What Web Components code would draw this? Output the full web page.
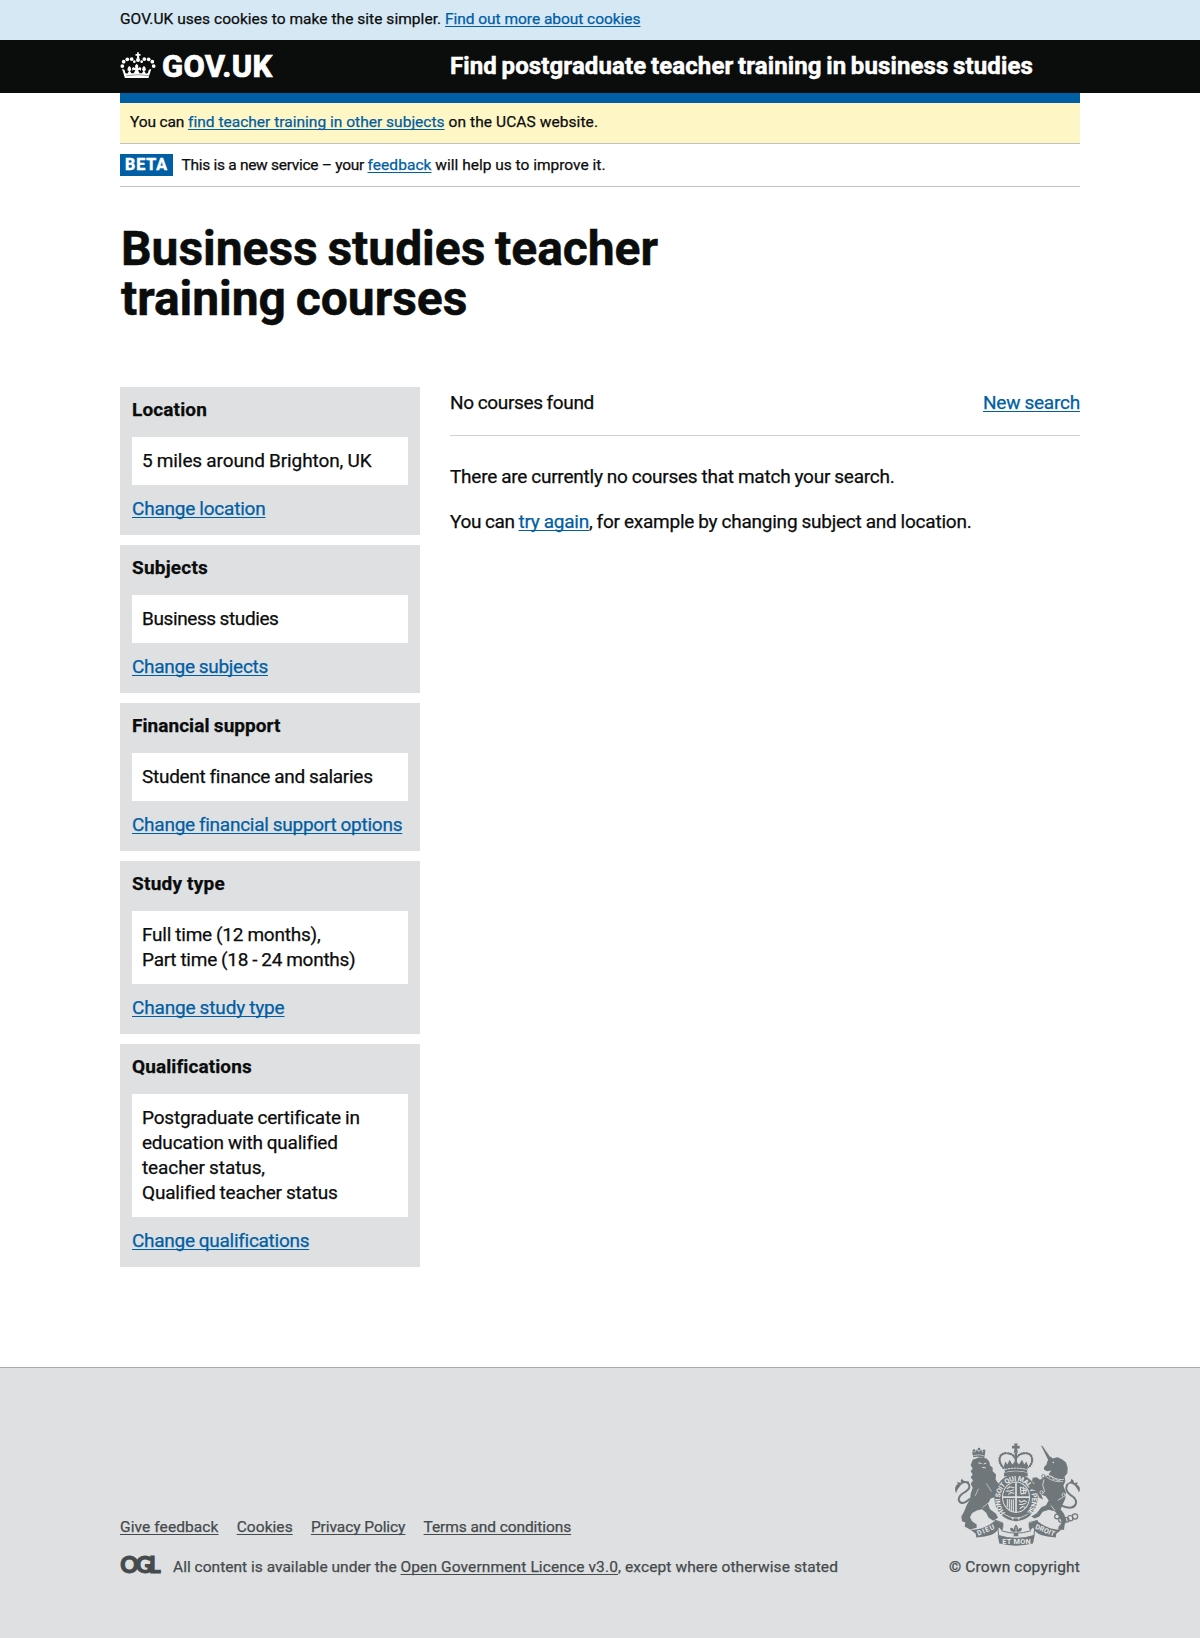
<!DOCTYPE html>
<html lang="en">
<head>
<meta charset="utf-8">
<title>Business studies teacher training courses</title>
<style>
body{margin:0;background:#fff;color:#0b0c0c;font:400 15.5px/20px Roboto,"Liberation Sans",sans-serif;-webkit-text-stroke:.25px}
a{color:#005ea5;text-decoration:underline;text-underline-offset:1.5px;text-decoration-thickness:1px;text-decoration-skip-ink:none}
h1,p{margin:0}
h1{font:700 48px/50px Roboto,sans-serif;margin:37px 0 63px 1px;word-spacing:-2px;-webkit-text-stroke:.5px}
.big p{font-size:19px;line-height:25px}
</style>
</head>
<body>
<cookie-bar><t-run w="325">GOV.UK uses cookies to make the site simpler. </t-run><a href="#"><t-run w="195.5">Find out more about cookies</t-run></a></cookie-bar>
<site-header><t-run w="583">Find postgraduate teacher training in business studies</t-run></site-header>
<page-width>
  <subject-notice><t-run w="58">You can </t-run><a href="#"><t-run w="256">find teacher training in other subjects</t-run></a><t-run w="153.5"> on the UCAS website.</t-run></subject-notice>
  <phase-banner><t-run w="186">This is a new service – your </t-run><a href="#"><t-run w="64">feedback</t-run></a><t-run w="174"> will help us to improve it.</t-run></phase-banner>
  <h1><t-run w="537">Business studies teacher<br>training courses</t-run></h1>
  <two-columns>
    <filter-card slot="side"><t-run slot="title" w="75">Location</t-run><t-run w="229.5">5 miles around Brighton, UK</t-run><a slot="change" href="#"><t-run w="133.5">Change location</t-run></a></filter-card>
    <filter-card slot="side"><t-run slot="title" w="76">Subjects</t-run><t-run w="136.5">Business studies</t-run><a slot="change" href="#"><t-run w="136">Change subjects</t-run></a></filter-card>
    <filter-card slot="side"><t-run slot="title" w="148.5">Financial support</t-run><t-run w="230">Student finance and salaries</t-run><a slot="change" href="#"><t-run w="269.5">Change financial support options</t-run></a></filter-card>
    <filter-card slot="side"><t-run slot="title" w="93">Study type</t-run><t-run w="178.5">Full time (12 months),</t-run><br><t-run w="213.5">Part time (18 - 24 months)</t-run><a slot="change" href="#"><t-run w="152.5">Change study type</t-run></a></filter-card>
    <filter-card slot="side"><t-run slot="title" w="119.5">Qualifications</t-run><t-run w="217">Postgraduate certificate in</t-run><br><t-run w="195">education with qualified</t-run><br><t-run w="123">teacher status,</t-run><br><t-run w="195">Qualified teacher status</t-run><a slot="change" href="#"><t-run w="176.5">Change qualifications</t-run></a></filter-card>
    <result-list class="big">
      <t-run slot="count" w="144">No courses found</t-run>
      <a slot="action" href="#"><t-run w="97">New search</t-run></a>
      <p><t-run w="444.5">There are currently no courses that match your search.</t-run></p>
      <p><t-run w="68.500">You can </t-run><a href="#"><t-run w="70.5">try again</t-run></a><t-run w="382.5">, for example by changing subject and location.</t-run></p>
    </result-list>
  </two-columns>
</page-width>
<site-footer></site-footer>

<script>
const define=(name,html)=>customElements.define(name,class extends HTMLElement{
  constructor(){super();this.attachShadow({mode:'open'}).innerHTML=html}
});
const linkCss='a{color:inherit;text-decoration:underline;text-underline-offset:1.5px;text-decoration-thickness:1px;text-decoration-skip-ink:none}';

define('cookie-bar',`<style>:host{display:block;background:#d5e8f3;height:40px}div{width:960px;margin:auto;padding-top:9px}</style><div><slot></slot></div>`);

define('crown-mark',`<style>:host{display:block;width:36px;height:26.4px}svg{display:block;width:100%;height:100%}</style>
<svg viewBox="30 155 108 79" fill="#fff">
<path d="M81.500 156h5v5h5v5h-5l2 8h-8l1-8h-5v-5h5z"/>
<circle cx="84" cy="179" r="6"/>
<circle cx="37" cy="197" r="5.600"/><circle cx="41" cy="184" r="5.600"/><circle cx="52" cy="177" r="5.600"/><circle cx="65" cy="176" r="5.600"/><circle cx="73" cy="184" r="4"/><circle cx="131" cy="197" r="5.600"/><circle cx="127" cy="184" r="5.600"/><circle cx="116" cy="177" r="5.600"/><circle cx="103" cy="176" r="5.600"/><circle cx="95" cy="184" r="4"/>
<path d="M36 205l8 4 2 9 6 2 5-8-5-2 2-9 4-4 4 4 2 8-4 3 4 7h7l5-9-5-2-3 4-2-8 4-4 6 4-1-8 5-6 5 6-1 8 6-4 4 4-2 8-3-4-5 2 5 9h7l4-7-4-3 2-8 4-4 4 4 2 9-5 2 5 8 6-2 2-9 8-4-9 29H45z"/>
<path d="M49 226q35-6 70 0" fill="none" stroke="#0b0c0c" stroke-width="1.200"/>
</svg>`);

define('site-header',`<style>:host{display:block;background:#0b0c0c;color:#fff;height:53px}
.in{width:960px;height:53px;margin:auto;display:flex}
.logo{width:330px;display:flex;align-items:flex-start;padding-top:12px;box-sizing:border-box}
.name{font:800 31px/30px Roboto,sans-serif;margin:0 0 0 6px;-webkit-text-stroke:.6px}
.title{font:700 24px/30px Roboto,sans-serif;padding-top:11px;word-spacing:-1.500px;-webkit-text-stroke:.5px}</style>
<div class="in"><div class="logo"><crown-mark></crown-mark><span class="name"><t-run w="110.500">GOV.UK</t-run></span></div><div class="title"><slot></slot></div></div>`);

define('page-width',`<style>:host{display:block;width:960px;margin:auto;border-top:10px solid #005ea5}</style><slot></slot>`);
define('subject-notice',`<style>:host{display:block;box-sizing:border-box;height:41px;background:#fff6c5;border-bottom:1px solid #bfc1c3;padding:9px 10px}</style><slot></slot>`);
define('phase-banner',`<style>:host{display:flex;align-items:flex-start;box-sizing:border-box;height:43px;border-bottom:1px solid #bfc1c3;padding-top:10px}
b{background:#005ea5;color:#fff;height:22px;width:53px;padding-left:5px;box-sizing:border-box;font-size:16px;font-weight:700;line-height:21px;margin-right:8.500px;-webkit-text-stroke:.5px}span{padding-top:1px}</style><b><t-run w="43">BETA</t-run></b><span><slot></slot></span>`);

define('two-columns',`<style>:host{display:flex;gap:30px;align-items:flex-start;font-size:19px;line-height:25px;word-spacing:-.400px}
.side{width:300px;display:flex;flex-direction:column;gap:10px}.main{flex:1}</style><div class="side"><slot name="side"></slot></div><div class="main"><slot></slot></div>`);

define('filter-card',`<style>:host{display:block;background:#dee0e2;padding:10px 12px 14px}
.t{font-weight:700;margin-bottom:15px;height:25px}.v{background:#fff;padding:11px 10px 12px;margin-bottom:11px}.c{height:25px}</style>
<div class="t"><slot name="title"></slot></div><div class="v"><slot></slot></div><div class="c"><slot name="change"></slot></div>`);

define('result-list',`<style>:host{display:block}.top{display:flex;justify-content:space-between;padding:3px 0 20px;border-bottom:1px solid #cfd1d3;margin-bottom:28px}.body{display:flex;flex-direction:column;gap:20px}</style>
<div class="top"><slot name="count"></slot><slot name="action"></slot></div><div class="body"><slot></slot></div>`);

define('royal-crest',`<style>:host{display:block;width:125px;height:103px}svg{display:block;width:100%;height:100%;overflow:visible}text{font-family:Roboto,sans-serif;font-weight:700;stroke:none}</style>
<svg viewBox="45 38 375 308" fill="#6f777b" stroke-linejoin="round" stroke-linecap="round">
<!-- lion -->
<path d="M100 80l-4-17 9 3 4-8 8 6 7-6 4 8 8-3-3 20q-17-6-33-3z"/>
<circle cx="117" cy="56" r="4"/><circle cx="102" cy="60" r="4"/><circle cx="132" cy="61" r="4"/>
<path d="M101 75q17-5 32 1" fill="none" stroke="#dee0e2" stroke-width="2"/>
<path d="M98 88L118 80 140 84 148 94 150 104 158 112 158 122 168 132 167 148 175 158 181 172 178 186 184 200 186 210 176 212 164 200 152 204 144 220 150 236 168 250 174 262 160 271 146 262 138 246 126 236 110 240 96 248 90 260 96 272 110 282 110 292 90 297 74 288 76 276 66 272 64 258 72 244 80 224 90 206 92 190 98 172 92 160 99 150 92 140 98 132 92 122 98 114 92 104z"/>
<path d="M88 206Q62 228 56 208 56 194 76 184 96 172 84 158" fill="none" stroke="#6f777b" stroke-width="6"/>
<path d="M88 162q-14-10-26 2-8 8-14 24-8-18 6-28l-4-4q8-2 12 2-1-10 4-14 2 10 20 8z"/>
<path d="M116 97l8 2m8 1l6-2M128 111l8 1" stroke="#dee0e2" stroke-width="3"/>
<path d="M128 231l17-14m-30-41l-9 19M140 160l14 22" stroke="#dee0e2" stroke-width="2" fill="none"/>
<!-- crown -->
<path d="M222 39h11l-2 7h8v8h-8l3 13h-13l3-13h-8v-8h8z"/>
<path d="M190 112q-14-16-11-29 3-15 21-15 18 1 24 13h6q7-12 25-13 18 0 21 15 3 14-11 29" fill="none" stroke="#6f777b" stroke-width="7" stroke-dasharray="1 7"/>
<path d="M190 112q-14-16-11-29 3-15 21-15 18 1 24 13h6q7-12 25-13 18 0 21 15 3 14-11 29" fill="none" stroke="#6f777b" stroke-width="3"/>
<path d="M224 67h7v43h-7zM192 106l4-13 6 9 7-14 8 14 10-12 10 12 9-14 7 14 6-9 5 13-3 19q-34-8-66 0z"/>
<path d="M195 117q33-8 65 0" fill="none" stroke="#dee0e2" stroke-width="3" stroke-dasharray="5 4"/>
<path d="M192 127q35-9 71 0v11q-35-9-71 0z"/>
<!-- garter and shield -->
<ellipse cx="228" cy="201" rx="65" ry="71"/>
<ellipse cx="228" cy="200" rx="42" ry="47" fill="#dee0e2"/>
<ellipse cx="228" cy="200" rx="39" ry="44"/>
<path d="M228 156v89M191 200h75" stroke="#dee0e2" stroke-width="5"/>
<g fill="none" stroke="#dee0e2" stroke-width="3.300"><path d="M202 174l8-5 12 3m-23 10h9l13-4m-15 13l7-5 9 2M241 170l2 20 14-2 2-12zM246 180h14m-9-10v19M238 210l5 5 10-5 7 5m-22 7h8l10-3m-16 15l8-6 7 2M202 207v22m6-22v31m6-30v33m6-34v36"/></g>
<path id="garter" d="M196 247A48 55 0 1 1 260 247" fill="none"/>
<text font-size="21" fill="#e8eaeb" textLength="250"><textPath href="#garter">HONI SOIT QUI MAL Y PENSE</textPath></text>
<path d="M194 252q34 22 68 0" fill="none" stroke="#dee0e2" stroke-width="2.500"/>
<circle cx="218" cy="264" r="3" fill="#dee0e2"/><circle cx="236" cy="264" r="3" fill="#dee0e2"/>
<!-- unicorn -->
<path d="M303 45l5 2 25 36-8 6z"/>
<path d="M322 92L332 78 338 84 352 80 366 86 378 96 383 112 382 128 374 138 376 152 370 166 378 186 376 204 368 222 362 236 372 250 380 270 374 282 372 298 354 298 356 288 366 276 356 256 344 242 326 238 308 244 298 258 284 264 274 258 290 248 304 230 318 224 326 210 318 198 304 192 309 207 298 202 288 180 276 176 274 164 284 160 276 152 278 142 290 140 300 148 310 142 322 136 334 120 322 122 312 118 312 110 320 101z"/>
<path d="M320 140q23 17 48 13m-47-24q27 22 50 18" fill="none" stroke="#dee0e2" stroke-width="2.200"/>
<path d="M325 132l4 8 7-3 4 10 8-2 5 7 8-4" fill="none" stroke="#dee0e2" stroke-width="2.400"/>
<circle cx="340" cy="96" r="2.500" fill="#dee0e2"/>
<path d="M366 226Q402 240 408 218 410 204 392 194 372 180 382 162" fill="none" stroke="#6f777b" stroke-width="6"/>
<path d="M380 166q10-12 20-4 10 6 17 24 8-16-7-24l4-5q-8-2-11 2-1-10-9-14-1 11-11 13z"/>
<g fill="none" stroke="#6f777b" stroke-width="3.500"><circle cx="351" cy="258" r="7"/><circle cx="364" cy="268" r="8"/><circle cx="380" cy="268" r="7"/><circle cx="391" cy="263" r="8"/><circle cx="405" cy="258" r="8"/></g>
<g fill="none" stroke="#dee0e2" stroke-width="2.500"><path d="M312 148l-4 15 6 20m40 26l14-8m-34 25l10 13"/><circle cx="310" cy="137" r="5" stroke="#6f777b"/><circle cx="305" cy="186" r="5"/><circle cx="371" cy="193" r="5"/></g>
<!-- motto ribbon -->
<path d="M91 297q37 4 75-27l24 10-5 19-8-8-5 8q-8 17-63 22l-2-11z"/>
<path d="M365 297q-37 4-75-27l-24 10 5 19 8-8 5 8q8 17 63 22l2-11z"/>
<path d="M166 270q10 18 10 45 53 17 106 0 0-27 10-45l-24 6q-3 14 4 25-44 14-87 0 6-10 3-23z" fill="none" stroke="#6f777b" stroke-width="3"/>
<path d="M173 314q56 20 111 0l-5 25q-51 13-101 0z"/>
<text font-size="21" fill="#e8eaeb" transform="translate(115 316) rotate(-23)" textLength="54">DIEU</text>
<text font-size="22" fill="#e8eaeb" x="187" y="339" textLength="85">ET MON</text>
<text font-size="21" fill="#e8eaeb" transform="translate(284 294) rotate(23)" textLength="62">DROIT</text>
<path d="M228 282q10 10 4 22 4-14 12-12 5 7-6 13v4h-5l3 8h-16l3-8h-5v-4q-11-6-6-13 8-2 12 12-6-12 4-22z"/>
<path d="M216 305h24M228 291v15" stroke="#dee0e2" stroke-width="2"/>
</svg>`);

define('ogl-mark',`<style>:host{display:block;width:53px;height:20px}svg{display:block;overflow:visible}text{font:900 22.500px Lato,sans-serif;stroke:#454a4c;stroke-width:1px}</style><svg width="41" height="20" fill="#454a4c"><text x="0.300" y="16.500" textLength="40.500">OGL</text></svg>`);

define('site-footer',`<style>:host{display:block;background:#dee0e2;border-top:1px solid #a4acaf;margin-top:100px;height:270px;color:#454a4c}${linkCss}
.in{width:960px;margin:auto;display:flex;justify-content:space-between;padding-top:75px}
.left{padding-top:74px}nav{display:flex;gap:18.200px;margin-bottom:19px}.lic{display:flex}.lic span{padding-top:1px}
.right{display:flex;flex-direction:column;align-items:flex-end}royal-crest{margin-bottom:11px}</style>
<div class="in"><div class="left"><nav><a href="#"><t-run w="98.500">Give feedback</t-run></a><a href="#"><t-run w="56">Cookies</t-run></a><a href="#"><t-run w="94.500">Privacy Policy</t-run></a><a href="#"><t-run w="147.500">Terms and conditions</t-run></a></nav>
<div class="lic"><ogl-mark></ogl-mark><span><t-run w="227.500">All content is available under the </t-run><a href="#"><t-run w="217.500">Open Government Licence v3.0</t-run></a><t-run w="220">, except where otherwise stated</t-run></span></div></div>
<div class="right"><royal-crest></royal-crest><t-run w="131">© Crown copyright</t-run></div></div>`);

// A run of text tracked so that its longest line, the first, sets to the measure given in "w".
customElements.define('t-run',class extends HTMLElement{
  constructor(){super();this.attachShadow({mode:'open'}).innerHTML='<style>:host{white-space:pre}</style><slot></slot>'}
  connectedCallback(){
    const r=document.createRange();r.selectNodeContents(this.firstChild);
    const n=this.firstChild.textContent.length,w=r.getBoundingClientRect().width;
    this.style.letterSpacing=((+this.getAttribute('w')-w)/n).toFixed(3)+'px';
  }
});
</script>
</body>
</html>
